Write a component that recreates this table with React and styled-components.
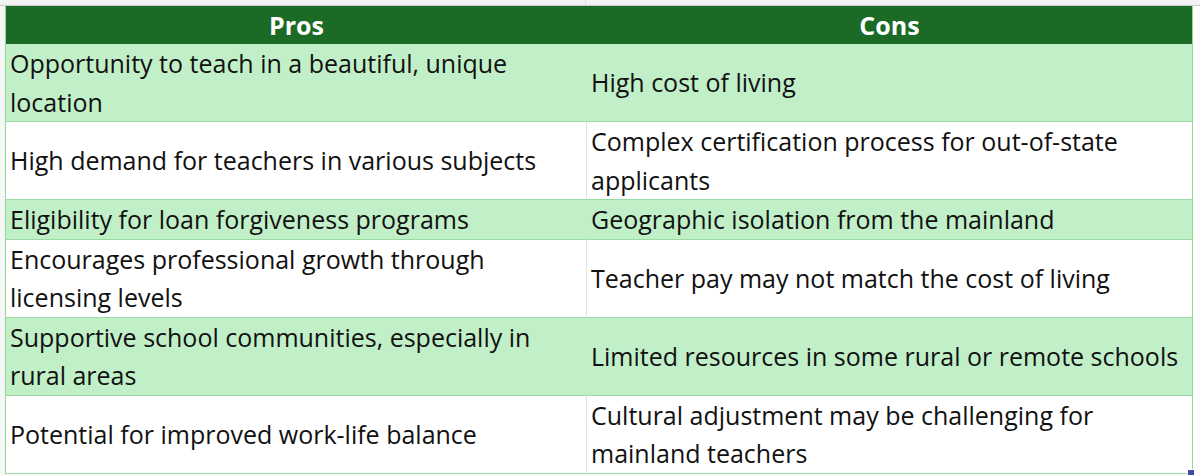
import React from "react";
import styled, { createGlobalStyle } from "styled-components";

const Global = createGlobalStyle`
  html, body { margin: 0; padding: 0; background: #ffffff; }
  body { font-family: "Open Sans", "Noto Sans", sans-serif; }
`;

const Sheet = styled.div`
  width: 1200px;
  height: 475px;
  background: #ffffff;
  display: grid;
  grid-template-columns: 5px 1188px 7px;
  grid-template-rows: 6px auto 1fr;
  overflow: hidden;
`;

const TopStrip = styled.div`
  grid-column: 1 / 4;
  grid-row: 1;
  background: #f2f2f2;
  border-bottom: 1px solid #c9c9c9;
  box-sizing: border-box;
  display: grid;
  grid-template-columns: 586px 1fr;
  & > span { border-right: 1px solid #dedede; }
`;

const LeftGutter = styled.div`
  grid-column: 1;
  grid-row: 2 / 4;
  background: #f6f6f6;
`;

const RightGutter = styled.div`
  grid-column: 3;
  grid-row: 2 / 4;
  background: #ffffff;
`;

const Table = styled.div`
  grid-column: 2;
  grid-row: 2;
  display: grid;
  grid-template-columns: 581px 605px;
  border-left: 1px solid #8fd99a;
  border-right: 1px solid #8fd99a;
  position: relative;
`;

const Bottom = styled.div`
  grid-column: 2;
  grid-row: 3;
  background: #f7f7f7;
`;

const Head = styled.div`
  background: #1b6b27;
  color: #ffffff;
  font-weight: 700;
  font-size: 25px;
  height: 38px;
  line-height: 38px;
  text-align: center;
  box-sizing: border-box;
`;

const Cell = styled.div`
  background: ${(p) => (p.$shade ? "#c1efc8" : "#ffffff")};
  border-bottom: 1px solid #98dca2;
  border-right: ${(p) => (p.$first ? (p.$shade ? "1px solid #c1efc8" : "1px solid #e3e3e3") : "none")};
  color: #111111;
  font-size: 25px;
  line-height: 38.5px;
  padding: 0 0 0 4px;
  display: flex;
  align-items: center;
  white-space: nowrap;
  min-height: 38px;
`;

const Handle = styled.div`
  position: absolute;
  right: -3px;
  bottom: -3px;
  width: 6px;
  height: 6px;
  background: #3b4ea3;
  border: 1px solid #ffffff;
`;

const rows = [
  [["Opportunity to teach in a beautiful, unique", "location"], ["High cost of living"], true],
  [["High demand for teachers in various subjects"], ["Complex certification process for out-of-state", "applicants"], false],
  [["Eligibility for loan forgiveness programs"], ["Geographic isolation from the mainland"], true],
  [["Encourages professional growth through", "licensing levels"], ["Teacher pay may not match the cost of living"], false],
  [["Supportive school communities, especially in", "rural areas"], ["Limited resources in some rural or remote schools"], true],
  [["Potential for improved work-life balance"], ["Cultural adjustment may be challenging for", "mainland teachers"], false],
];

const Lines = ({ lines }) => (
  <div>
    {lines.map((l, i) => (
      <div key={i}>{l}</div>
    ))}
  </div>
);

export default function App() {
  return (
    <>
      <Global />
      <Sheet>
        <TopStrip>
          <span />
          <div />
        </TopStrip>
        <LeftGutter />
        <Table>
          <Head>Pros</Head>
          <Head>Cons</Head>
          {rows.map(([a, b, shade], i) => (
            <React.Fragment key={i}>
              <Cell $shade={shade} $first>
                <Lines lines={a} />
              </Cell>
              <Cell $shade={shade}>
                <Lines lines={b} />
              </Cell>
            </React.Fragment>
          ))}
          <Handle />
        </Table>
        <RightGutter />
        <Bottom />
      </Sheet>
    </>
  );
}
